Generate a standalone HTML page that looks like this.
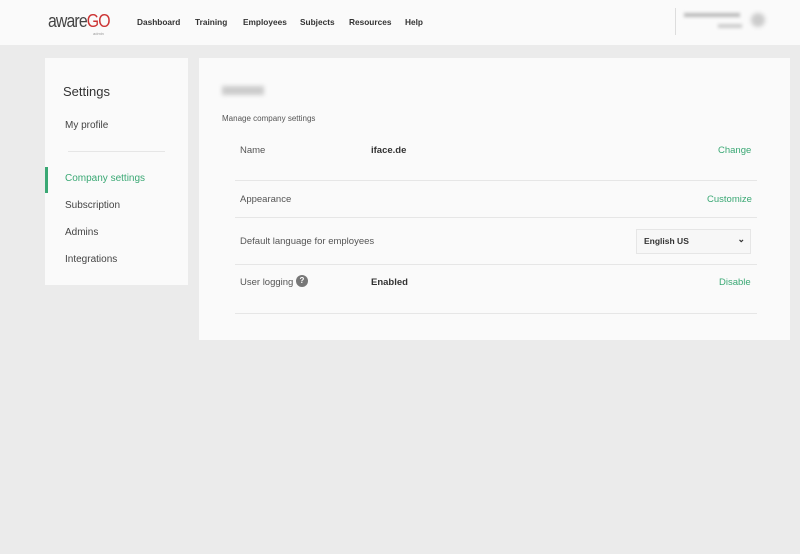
<!DOCTYPE html>
<html><head><style>
body{margin:0;width:800px;height:554px;background:#ebebeb;font-family:"Liberation Sans",sans-serif;position:relative;overflow:hidden;color:#444}
.hdr{position:absolute;left:0;top:0;width:800px;height:45px;background:#fafafa}
.a{position:absolute;white-space:nowrap}
.nav{font-size:8.3px;font-weight:bold;color:#333;top:17px}
.card{position:absolute;background:#fafafa}
.sb{font-size:10px;color:#444}
.line{position:absolute;height:1px;background:#e6e6e6}
.lbl{font-size:9.5px;color:#555}
.g{color:#3aa874}
</style></head><body>
<div class="hdr">
 <div class="a" style="left:48px;top:11px;font-size:18px;color:#444;letter-spacing:-1px;transform:scaleX(0.88);transform-origin:left">aware<span style="color:#c33">GO</span></div>
 <div class="a" style="left:93px;top:31px;font-size:4px;color:#999">admin</div>
 <div class="a nav" style="left:137px">Dashboard</div>
 <div class="a nav" style="left:195px">Training</div>
 <div class="a nav" style="left:243px">Employees</div>
 <div class="a nav" style="left:300px">Subjects</div>
 <div class="a nav" style="left:349px">Resources</div>
 <div class="a nav" style="left:405px">Help</div>
 <div class="a" style="left:675px;top:8px;width:1px;height:27px;background:#ddd"></div>
 <div class="a" style="left:684px;top:13px;width:56px;height:4px;background:#bbb;filter:blur(1.5px)"></div>
 <div class="a" style="left:718px;top:24px;width:24px;height:4px;background:#ccc;filter:blur(1.5px)"></div>
 <div class="a" style="left:751px;top:13px;width:14px;height:14px;border-radius:7px;background:#ccc;filter:blur(2px)"></div>
</div>
<div class="card" style="left:45px;top:58px;width:143px;height:227px">
 <div class="a" style="left:18px;top:26px;font-size:13px;color:#333">Settings</div>
 <div class="a sb" style="left:20px;top:62px">My profile</div>
 <div class="line" style="left:23px;top:93px;width:97px"></div>
 <div class="a" style="left:0;top:109px;width:3px;height:26px;background:#3aa874"></div>
 <div class="a sb g" style="left:20px;top:115px">Company settings</div>
 <div class="a sb" style="left:20px;top:142px">Subscription</div>
 <div class="a sb" style="left:20px;top:169px">Admins</div>
 <div class="a sb" style="left:20px;top:196px">Integrations</div>
</div>
<div class="card" style="left:199px;top:58px;width:591px;height:282px">
 <div class="a" style="left:23px;top:28px;width:42px;height:9px;background:#ccc;filter:blur(2px)"></div>
 <div class="a" style="left:23px;top:56px;font-size:8px;color:#555">Manage company settings</div>
 <div class="a lbl" style="left:41px;top:87px">Name</div>
 <div class="a" style="left:172px;top:87px;font-size:9.5px;font-weight:bold;color:#333">iface.de</div>
 <div class="a lbl g" style="left:519px;top:87px">Change</div>
 <div class="line" style="left:36px;top:122px;width:522px"></div>
 <div class="a lbl" style="left:41px;top:136px">Appearance</div>
 <div class="a lbl g" style="left:508px;top:136px">Customize</div>
 <div class="line" style="left:36px;top:159px;width:522px"></div>
 <div class="a lbl" style="left:41px;top:178px">Default language for employees</div>
 <div class="a" style="left:437px;top:171px;width:113px;height:23px;border:1px solid #e6e6e6;background:#f7f7f7;font-size:8.5px;color:#333;font-weight:bold"><span style="position:absolute;left:7px;top:6px">English US</span><span style="position:absolute;right:5px;top:4px;font-size:9px">⌄</span></div>
 <div class="line" style="left:36px;top:206px;width:522px"></div>
 <div class="a lbl" style="left:41px;top:219px">User logging</div>
 <div class="a" style="left:97px;top:217px;width:12px;height:12px;border-radius:6px;background:#777;color:#fff;font-size:8px;font-weight:bold;text-align:center;line-height:12px">?</div>
 <div class="a" style="left:172px;top:219px;font-size:9.5px;color:#333;font-weight:bold">Enabled</div>
 <div class="a lbl g" style="left:520px;top:219px">Disable</div>
 <div class="line" style="left:36px;top:255px;width:522px"></div>
</div>
</body></html>
